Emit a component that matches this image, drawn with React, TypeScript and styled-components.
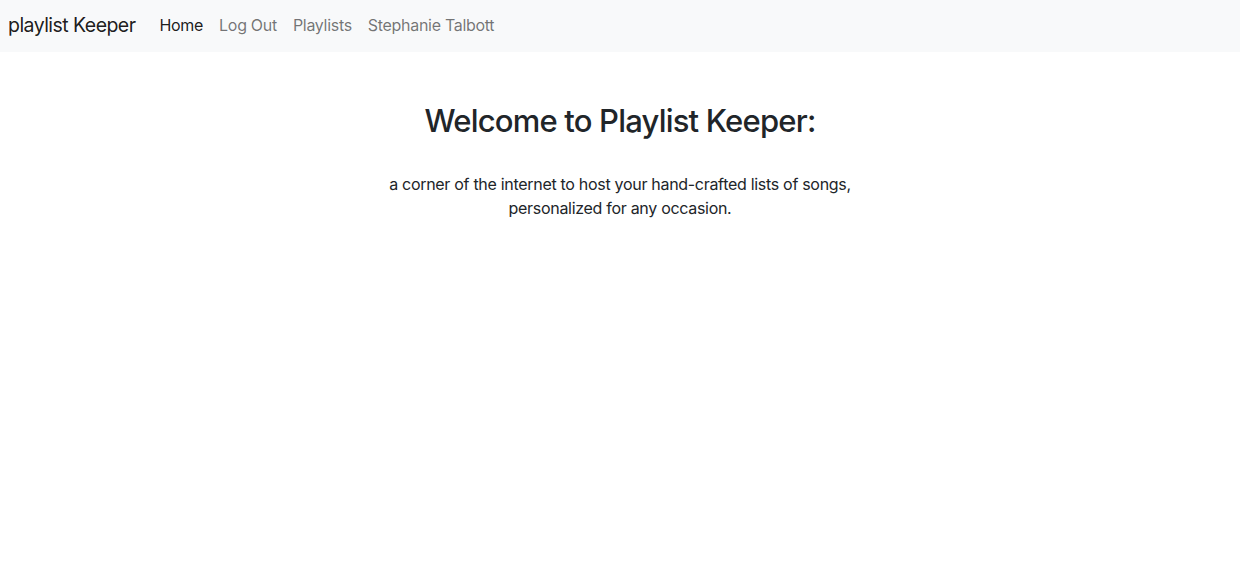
import React from 'react';
import styled, { createGlobalStyle } from 'styled-components';

const GlobalStyle = createGlobalStyle`
  html, body {
    margin: 0;
    padding: 0;
    background: #fff;
    font-family: Inter, "Noto Sans", "Liberation Sans", sans-serif;
    color: #212529;
    -webkit-font-smoothing: antialiased;
  }
  * {
    box-sizing: border-box;
  }
`;

const Navbar = styled.nav`
  display: flex;
  align-items: center;
  height: 52px;
  padding: 0 8px 2px;
  background: #f8f9fa;
`;

const Brand = styled.a`
  font-size: 19.5px;
  line-height: 30px;
  color: rgba(0, 0, 0, 0.9);
  text-decoration: none;
  margin-right: 16px;
  letter-spacing: -0.55px;
`;

const NavList = styled.ul`
  display: flex;
  list-style: none;
  margin: 0;
  padding: 0;
`;

const NavLink = styled.a<{ active?: boolean }>`
  display: block;
  padding: 8px;
  font-size: 16px;
  line-height: 24px;
  text-decoration: none;
  letter-spacing: -0.3px;
  color: ${(p) => (p.active ? 'rgba(0, 0, 0, 0.9)' : 'rgba(0, 0, 0, 0.55)')};
`;

const Main = styled.main`
  display: flex;
  flex-direction: column;
  align-items: center;
  padding-top: 50px;
  text-align: center;
`;

const Title = styled.h2`
  margin: 0 0 32px;
  font-size: 31px;
  font-weight: 500;
  line-height: 38px;
  letter-spacing: -0.8px;
`;

const Lead = styled.p`
  margin: 0;
  max-width: 480px;
  font-size: 16px;
  line-height: 24px;
  letter-spacing: -0.3px;
`;

const links = [
  { label: 'Home', active: true },
  { label: 'Log Out' },
  { label: 'Playlists' },
  { label: 'Stephanie Talbott' },
];

const App = () => {
  return (
    <>
      <GlobalStyle />
      <Navbar>
        <Brand href="#">playlist Keeper</Brand>
        <NavList>
          {links.map((l) => (
            <li key={l.label}>
              <NavLink href="#" active={l.active}>
                {l.label}
              </NavLink>
            </li>
          ))}
        </NavList>
      </Navbar>
      <Main>
        <Title>Welcome to Playlist Keeper:</Title>
        <Lead>
          a corner of the internet to host your hand-crafted lists of songs,
          personalized for any occasion.
        </Lead>
      </Main>
    </>
  );
};

export default App;
